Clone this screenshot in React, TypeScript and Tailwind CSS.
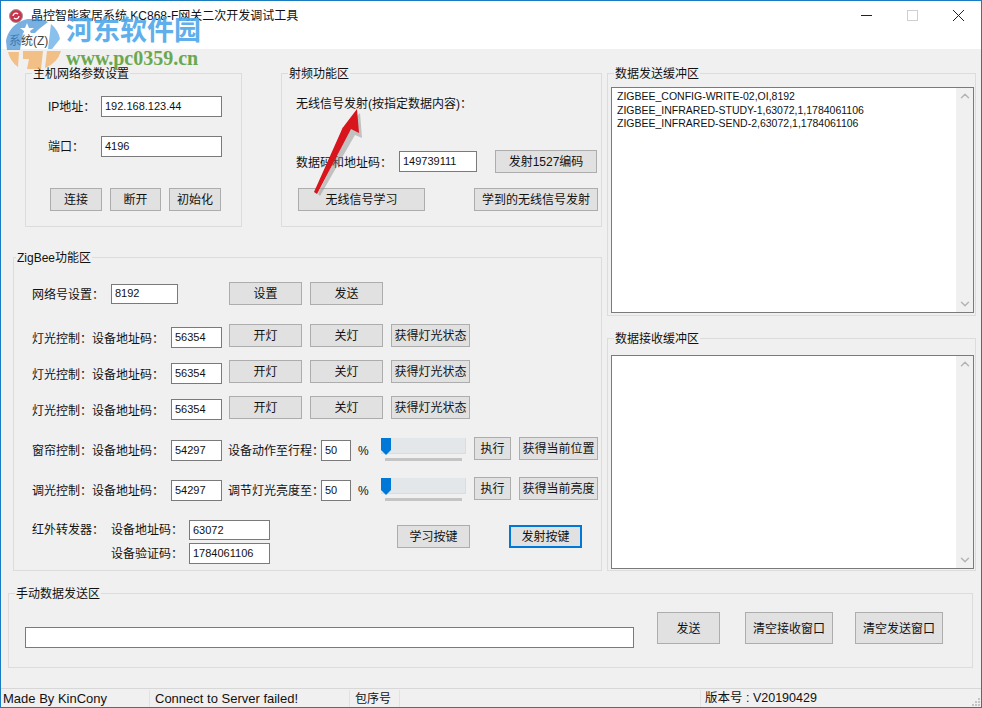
import React from 'react';
import { ChevronUp, ChevronDown } from 'lucide-react';

const Btn: React.FC<{ w: string; h?: string; focus?: boolean; className?: string; children: React.ReactNode }> = ({ w, h = 'h-[23px]', focus, className = '', children }) => (
  <div className={`${w} ${h} ${className} shrink-0 flex items-center justify-center pt-[1px] bg-[#e1e1e1] whitespace-nowrap ${focus ? 'border-2 border-[#0078d7]' : 'border border-[#adadad]'}`}>
    {children}
  </div>
);

const Input: React.FC<{ w: string; h?: string; className?: string; children?: React.ReactNode }> = ({ w, h = 'h-[21px]', className = '', children }) => (
  <div className={`${w} ${h} ${className} shrink-0 flex items-center pl-[3px] bg-white border border-[#7a7a7a] text-[11px]`}>
    {children}
  </div>
);

const Group: React.FC<{ title: string; className: string; inset?: string; children: React.ReactNode }> = ({ title, className, inset = 'ml-[6px]', children }) => (
  <fieldset className={`${className} border border-[#dcdcdc] min-w-0`}>
    <legend className={`${inset} px-[1px] h-4 leading-[18px] text-[12px] whitespace-nowrap`}>{title}</legend>
    {children}
  </fieldset>
);

const Slider: React.FC = () => (
  <div className="ml-2 mt-[2px] w-[85px] flex flex-col shrink-0">
    <div className="h-[16px] bg-[#e4e7e9] border-r border-b border-[#dcdcdc] flex items-start">
      <svg width="10" height="17" viewBox="0 0 10 17"><path d="M0 0H10V12L5 17L0 12Z" fill="#0078d7" /></svg>
    </div>
    <div className="mt-[4px] ml-1 w-[77px] h-[3px] bg-[#c4c4c4]" />
  </div>
);

const LightRow: React.FC<{ mt: string }> = ({ mt }) => (
  <div className={`${mt} flex items-center h-[23px]`}>
    <span className="w-[139px] mt-[6px]">灯光控制：设备地址码：</span>
    <Input w="w-[51px]" className="mt-1">56354</Input>
    <Btn w="w-[73px]" className="ml-[7px]">开灯</Btn>
    <Btn w="w-[73px]" className="ml-2">关灯</Btn>
    <Btn w="w-[79px]" className="ml-2">获得灯光状态</Btn>
  </div>
);

const SliderRow: React.FC<{ mt: string; name: string; label: string; action: string }> = ({ mt, name, label, action }) => (
  <div className={`${mt} flex items-center h-[23px]`}>
    <span className="w-[139px] mt-[4px] shrink-0">{name}：设备地址码：</span>
    <Input w="w-[51px]" className="mt-1">54297</Input>
    <span className="ml-[6px] w-[93px] mt-[4px] shrink-0 whitespace-nowrap">{label}：</span>
    <Input w="w-[30px]" className="mt-1">50</Input>
    <span className="ml-[7px] w-[15px] mt-[4px] shrink-0">%</span>
    <Slider />
    <Btn w="w-[37px]" className="ml-2">执行</Btn>
    <Btn w="w-[79px]" className="ml-2">{action}</Btn>
  </div>
);

const TextBox: React.FC<{ className: string; children?: React.ReactNode }> = ({ className, children }) => (
  <div className={`${className} flex bg-white border border-[#7a7a7a]`}>
    <div className="flex-1 pl-[5px] pt-[2px] text-[10.5px] leading-[13.5px] whitespace-pre">{children}</div>
    <div className="w-[17px] bg-[#f0f0f0] flex flex-col items-center justify-between py-[1px] text-[#b4b4b4]">
      <ChevronUp size={14} strokeWidth={2.5} />
      <ChevronDown size={14} strokeWidth={2.5} />
    </div>
  </div>
);

export default function App() {
  return (
    <div className="relative w-[982px] h-[708px] flex flex-col overflow-hidden bg-[#f0f0f0] border-x border-y border-[#1a7cc0] text-[12px] text-[#111] font-['Liberation_Sans','Noto_Sans_CJK_SC',sans-serif]">
      {/* title bar */}
      <div className="h-[29px] bg-white flex items-center shrink-0">
        <svg className="ml-[8px]" width="14" height="14" viewBox="0 0 14 14">
          <circle cx="7" cy="7" r="6.5" fill="#c9344c" stroke="#9a9a9a" />
          <path d="M4 7a3 3 0 0 1 5-2M10 7a3 3 0 0 1-5 2" fill="none" stroke="#fff" strokeWidth="1.3" />
        </svg>
        <span className="ml-2 text-[12px] whitespace-nowrap">晶控智能家居系统 KC868-F网关二次开发调试工具</span>
        <div className="ml-auto flex items-center mr-[17px] gap-[35px]">
          <svg width="11" height="11" viewBox="0 0 11 11"><path d="M0 5.5H11" stroke="#222" /></svg>
          <svg width="11" height="11" viewBox="0 0 11 11"><rect x="0.5" y="0.5" width="10" height="10" fill="none" stroke="#cfcfcf" /></svg>
          <svg width="11" height="11" viewBox="0 0 11 11"><path d="M0 0L11 11M11 0L0 11" stroke="#222" /></svg>
        </div>
      </div>
      {/* menu */}
      <div className="h-[19px] bg-white flex items-center pl-2 pt-[2px] shrink-0 text-[#444]">系统(Z)</div>

      {/* main area */}
      <div className="flex pt-4 shrink-0">
        <div className="ml-3 w-[589px] flex flex-col">
          <div className="flex">
            <Group title="主机网络参数设置" className="ml-3 w-[217px] h-[162px]">
              <div className="pl-[22px]">
                <div className="mt-[15px] flex items-center h-[21px]">
                  <span className="w-[53px]">IP地址：</span>
                  <Input w="w-[121px]" className="text-[11.5px]">192.168.123.44</Input>
                </div>
                <div className="mt-[19px] flex items-center h-[21px]">
                  <span className="w-[53px]">端口：</span>
                  <Input w="w-[121px]">4196</Input>
                </div>
                <div className="mt-[31px] ml-[2px] flex gap-2">
                  <Btn w="w-[52px]">连接</Btn>
                  <Btn w="w-[51px]">断开</Btn>
                  <Btn w="w-[52px]">初始化</Btn>
                </div>
              </div>
            </Group>
            <Group title="射频功能区" className="ml-[39px] w-[321px] h-[162px]">
              <div className="pl-[14px]">
                <div className="mt-[15px] h-4 leading-4 whitespace-nowrap">无线信号发射(按指定数据内容)：</div>
                <div className="mt-[38px] flex items-center h-[23px]">
                  <span className="w-[103px] pt-[2px]">数据码和地址码：</span>
                  <Input w="w-[78px]">149739111</Input>
                  <Btn w="w-[102px]" className="ml-[18px]">发射1527编码</Btn>
                </div>
                <div className="mt-[15px] ml-[2px] flex">
                  <Btn w="w-[127px]">无线信号学习</Btn>
                  <Btn w="w-[124px]" className="ml-[49px]">学到的无线信号发射</Btn>
                </div>
              </div>
            </Group>
          </div>
          <Group title="ZigBee功能区" inset="ml-[2px]" className="mt-[22px] w-[589px] h-[322px]">
            <div className="pl-[18px]">
              <div className="mt-[17px] flex items-center h-[23px]">
                <span className="w-[79px] pt-[2px]">网络号设置：</span>
                <Input w="w-[67px]" h="h-[20px]">8192</Input>
                <Btn w="w-[73px]" className="ml-[51px]">设置</Btn>
                <Btn w="w-[73px]" className="ml-2">发送</Btn>
              </div>
              <LightRow mt="mt-[19px]" />
              <LightRow mt="mt-[13px]" />
              <LightRow mt="mt-[13px]" />
              <SliderRow mt="mt-[18px]" name="窗帘控制" label="设备动作至行程" action="获得当前位置" />
              <SliderRow mt="mt-[17px]" name="调光控制" label="调节灯光亮度至" action="获得当前亮度" />
              <div className="mt-[20px] flex">
                <span className="w-[79px] h-[20px] leading-[20px]">红外转发器：</span>
                <div className="flex flex-col gap-[3px] w-[159px]">
                  <div className="flex items-center">
                    <span className="w-[78px]">设备地址码：</span>
                    <Input w="w-[81px]" h="h-[20px]">63072</Input>
                  </div>
                  <div className="flex items-center">
                    <span className="w-[78px]">设备验证码：</span>
                    <Input w="w-[81px]">1784061106</Input>
                  </div>
                </div>
                <Btn w="w-[73px]" className="ml-[127px] mt-[5px]">学习按键</Btn>
                <Btn w="w-[73px]" focus className="ml-[39px] mt-[5px]">发射按键</Btn>
              </div>
            </div>
          </Group>
        </div>

        <div className="ml-[5px] w-[369px] flex flex-col">
          <Group title="数据发送缓冲区" className="w-[369px] h-[251px]">
            <TextBox className="ml-[3px] mt-[6px] w-[363px] h-[226px]">{'ZIGBEE_CONFIG-WRITE-02,OI,8192\nZIGBEE_INFRARED-STUDY-1,63072,1,1784061106\nZIGBEE_INFRARED-SEND-2,63072,1,1784061106'}</TextBox>
          </Group>
          <Group title="数据接收缓冲区" className="mt-[14px] w-[369px] h-[241px]">
            <TextBox className="ml-[3px] mt-[9px] w-[363px] h-[214px]" />
          </Group>
        </div>
      </div>

      {/* manual send */}
      <Group title="手动数据发送区" className="ml-[7px] mt-[14px] w-[965px] h-[83px] shrink-0">
        <div className="flex items-start pl-4">
          <Input w="w-[609px]" className="mt-[26px]" />
          <Btn w="w-[63px]" h="h-[32px]" className="ml-[23px] mt-[11px]">发送</Btn>
          <Btn w="w-[88px]" h="h-[32px]" className="ml-[25px] mt-[11px]">清空接收窗口</Btn>
          <Btn w="w-[88px]" h="h-[32px]" className="ml-[22px] mt-[11px]">清空发送窗口</Btn>
        </div>
      </Group>

      {/* status bar */}
      <div className="mt-auto h-[19px] flex items-center pt-[1px] border-t border-[#d7d7d7] shrink-0 text-[13px]">
        <span className="w-[149px] pl-[2px] h-full flex items-center border-r border-[#e2e2e2]">Made By KinCony</span>
        <span className="w-[200px] pl-[5px] h-full flex items-center border-r border-[#e2e2e2]">Connect to Server failed!</span>
        <span className="w-[50px] pl-[5px] h-full flex items-center border-r border-[#e2e2e2] text-[12px]">包序号</span>
        <span className="ml-[300px] pl-1 h-full flex items-center border-l border-[#e2e2e2] whitespace-nowrap text-[12.5px]">版本号 : V20190429</span>
      </div>

      {/* watermark + annotation overlay */}
      <svg className="absolute left-[4px] top-[18px] opacity-70 pointer-events-none" width="60" height="50" viewBox="0 0 60 50">
        <path d="M1 22A28 26 0 0 1 43 3L34 10L30 14L18 14L15 31L2 31Z" fill="#3f8fd6" />
        <path d="M46 5A28 26 0 0 1 55 20L47 30H43Z" fill="#5aa6e4" />
        <path d="M3 33H14L13 48A28 26 0 0 1 3 33ZM18 32H38L36 50H22L24 40H18ZM42 32H56A28 26 0 0 1 40 49Z" fill="#f3ab5c" />
        <path d="M22 4L24 9L29 9L25 12L27 17L22 14L18 17L19 12L15 9L20 9Z" fill="#fff" />
      </svg>
      <div className="absolute left-[65px] top-[14px] text-[27px] leading-[32px] font-bold text-[#4ea7ea] opacity-90 whitespace-nowrap pointer-events-none">河东软件园</div>
      <div className="absolute left-[65px] top-[47px] text-[20px] leading-[20px] font-bold font-['Liberation_Serif',serif] text-[#6aa84f] whitespace-nowrap pointer-events-none">www.pc0359.cn</div>
      <svg className="absolute left-0 top-0 pointer-events-none" width="982" height="708" viewBox="0 0 982 708">
        <path d="M317 193L345 135L340 130L359 112L361 137L354 134L319 195Z" fill="#888" opacity="0.45" />
        <path d="M313 191L342 126L340 129L356 108L358 132L350 128L316 193Z" fill="#d8141c" />
      </svg>
      <svg className="absolute right-0 bottom-0" width="10" height="10" viewBox="0 0 10 10">
        <path d="M7 1h2v2H7zM4 4h2v2H4zM7 4h2v2H7zM1 7h2v2H1zM4 7h2v2H4zM7 7h2v2H7z" fill="#c4c4c4" />
      </svg>
    </div>
  );
}
